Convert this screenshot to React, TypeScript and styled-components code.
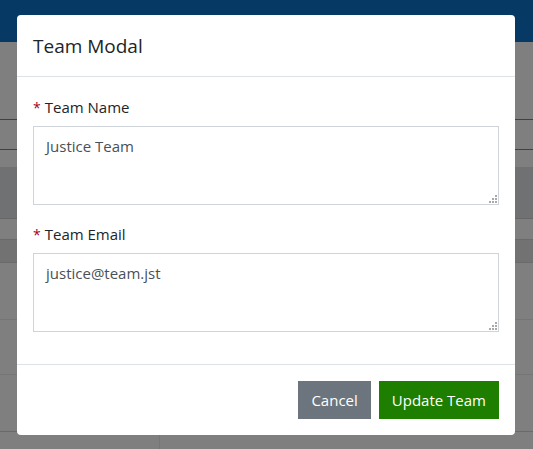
import React from 'react';
import styled, { createGlobalStyle } from 'styled-components';

const GlobalStyle = createGlobalStyle`
  html, body {
    margin: 0;
    padding: 0;
  }
  body {
    font-family: "Open Sans", "Noto Sans", "Liberation Sans", sans-serif;
    color: #212529;
  }
`;

const Page = styled.div`
  position: relative;
  width: 533px;
  height: 449px;
  overflow: hidden;
  background: #7f7f7f;
`;

const TopBar = styled.div`
  height: 42px;
  background: #063a65;
`;

const BgRow = styled.div<{ $h: number; $bg?: string; $line?: string }>`
  height: ${(p) => p.$h}px;
  background: ${(p) => p.$bg || '#7f7f7f'};
  border-bottom: 1px solid ${(p) => p.$line || 'transparent'};
`;

const BgSplitRow = styled.div`
  height: 17px;
  display: grid;
  grid-template-columns: 160px 1fr;
  & > div:first-child {
    border-right: 1px solid #767676;
  }
`;

const Modal = styled.div`
  position: absolute;
  left: 17px;
  top: 15px;
  width: 498px;
  height: 420px;
  background: #fff;
  border-radius: 4px;
  display: flex;
  flex-direction: column;
  box-sizing: border-box;
`;

const Header = styled.div`
  height: 62px;
  padding: 0 16px;
  display: flex;
  align-items: center;
  border-bottom: 1px solid #dee2e6;
  box-sizing: border-box;
`;

const Title = styled.h5`
  margin: 0;
  font-size: 19px;
  font-weight: 400;
  color: #212529;
`;

const Body = styled.div`
  flex: 1;
  padding: 19px 16px 0;
`;

const Field = styled.div`
  margin-bottom: 18px;
`;

const Label = styled.label`
  display: flex;
  align-items: baseline;
  gap: 4px;
  font-size: 15px;
  line-height: 22px;
  margin-bottom: 7px;
  color: #212529;
`;

const Required = styled.span`
  color: #a4001d;
  font-size: 14px;
`;

const InputBox = styled.div`
  position: relative;
`;

const TextArea = styled.textarea`
  display: block;
  width: 100%;
  height: 79px;
  box-sizing: border-box;
  padding: 8px 12px;
  border: 1px solid #ced4da;
  border-radius: 0;
  font-family: "Open Sans", "Noto Sans", "Liberation Sans", sans-serif;
  font-size: 15px;
  line-height: 22px;
  color: #495057;
  resize: none;
  outline: none;
`;

const Grip = styled.svg`
  position: absolute;
  right: 2px;
  bottom: 2px;
  width: 8px;
  height: 8px;
  pointer-events: none;
`;

const Footer = styled.div`
  height: 71px;
  border-top: 1px solid #dee2e6;
  padding: 0 16px;
  display: flex;
  justify-content: flex-end;
  align-items: center;
  gap: 8px;
  box-sizing: border-box;
`;

const Button = styled.button<{ $variant: 'secondary' | 'success' }>`
  height: 38px;
  padding: 0 13px;
  border: none;
  border-radius: 0;
  font-family: "Open Sans", "Noto Sans", "Liberation Sans", sans-serif;
  font-size: 15px;
  color: #fff;
  background: ${(p) => (p.$variant === 'success' ? '#1e7e00' : '#6c757d')};
  cursor: pointer;
`;

const ResizeGrip = () => (
  <Grip viewBox="0 0 8 8" fill="#a9a9a9">
    <rect x="6" y="0" width="2" height="2" />
    <rect x="3" y="3" width="2" height="2" />
    <rect x="6" y="3" width="2" height="2" />
    <rect x="0" y="6" width="2" height="2" />
    <rect x="3" y="6" width="2" height="2" />
    <rect x="6" y="6" width="2" height="2" />
  </Grip>
);

const TeamField = ({ label, value }: { label: string; value: string }) => (
  <Field>
    <Label>
      <Required>*</Required>
      {label}
    </Label>
    <InputBox>
      <TextArea readOnly value={value} />
      <ResizeGrip />
    </InputBox>
  </Field>
);

const App = () => {
  return (
    <Page>
      <GlobalStyle />
      <TopBar />
      <BgRow $h={77} $line="#1b4a73" />
      <BgRow $h={29} $line="#1b4a73" />
      <BgRow $h={16} />
      <BgRow $h={51} $bg="#6f7173" $line="#666" />
      <BgRow $h={20} $line="#6a6a6a" />
      <BgRow $h={22} $bg="#727272" $line="#6a6a6a" />
      <BgRow $h={56} $line="#757575" />
      <BgRow $h={54} $line="#757575" />
      <BgRow $h={56} $line="#6a6a6a" />
      <BgSplitRow>
        <div />
        <div />
      </BgSplitRow>

      <Modal>
        <Header>
          <Title>Team Modal</Title>
        </Header>
        <Body>
          <TeamField label="Team Name" value="Justice Team" />
          <TeamField label="Team Email" value="justice@team.jst" />
        </Body>
        <Footer>
          <Button $variant="secondary">Cancel</Button>
          <Button $variant="success">Update Team</Button>
        </Footer>
      </Modal>
    </Page>
  );
};

export default App;
